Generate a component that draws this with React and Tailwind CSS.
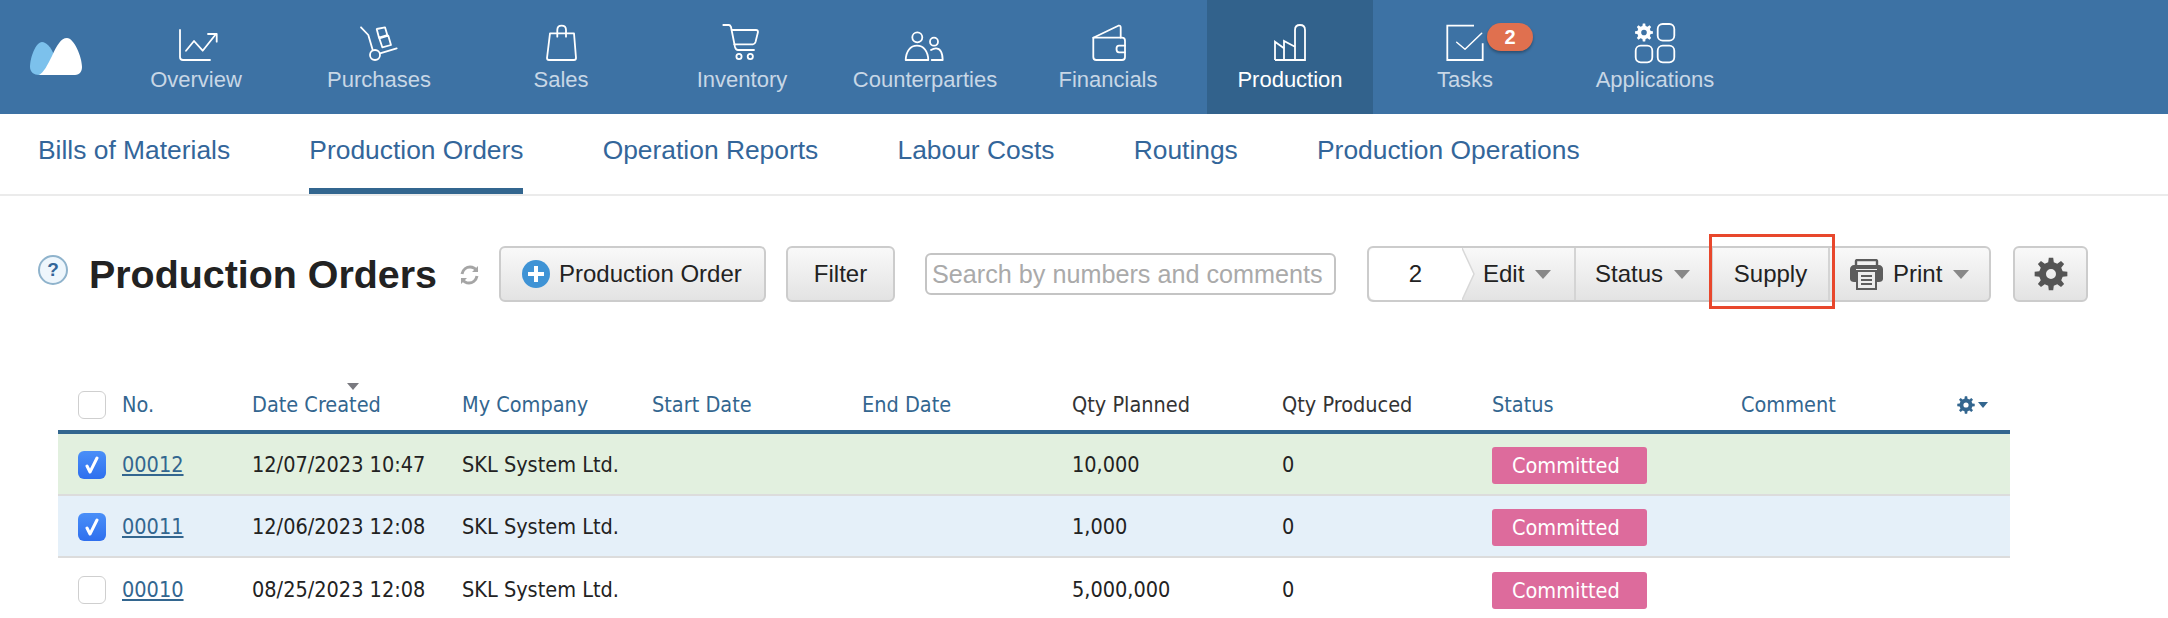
import React from 'react';

const line = { fill: 'none', stroke: '#fff', strokeWidth: 1.8, strokeLinecap: 'round', strokeLinejoin: 'round' };

// gear outline, used by the nav, the toolbar and the table header
const gearPath = (cx, cy, outer, inner, hole, teeth = 8) => {
  let d = '';
  const step = (Math.PI * 2) / teeth;
  for (let i = 0; i < teeth; i++) {
    const a = i * step - Math.PI / 2;
    const pts = [
      [inner, a - step * 0.3],
      [outer, a - step * 0.17],
      [outer, a + step * 0.17],
      [inner, a + step * 0.3],
    ];
    pts.forEach(([r, t], j) => {
      d += `${i === 0 && j === 0 ? 'M' : 'L'}${(cx + r * Math.cos(t)).toFixed(2)} ${(cy + r * Math.sin(t)).toFixed(2)}`;
    });
  }
  d += `ZM${cx - hole} ${cy}a${hole} ${hole} 0 1 0 ${hole * 2} 0a${hole} ${hole} 0 1 0 ${-hole * 2} 0Z`;
  return d;
};

// nav icons are drawn in page coordinates, the viewBox is centred on the item
const NavIcon = ({ center, children }) => (
  <svg width="60" height="64" viewBox={`${center - 30} 0 60 64`} {...line}>
    {children}
  </svg>
);

const Logo = () => (
  <svg width="52" height="37" viewBox="0 0 52 37">
    <path d="M12 4C6 4 0 19 0 29C0 34 4 37 9 37H14L24 17C21 9 16 4 12 4Z" fill="#7cc1ec" />
    <path d="M37 0C31 0 27 7 22 18C17 28 14 34 9 37H45C50 37 52 33 52 29C52 19 44 0 37 0Z" fill="#fff" />
  </svg>
);

const navItems = [
  {
    label: 'Overview',
    width: 'w-[166px]',
    icon: (
      <NavIcon center={196}>
        <path d="M180 30V57C180 59 181 60 183 60H210" />
        <path d="M186 50.7L194 41L202.7 50.7L216 34" />
        <path d="M208 34H216.7V41.7" />
      </NavIcon>
    ),
  },
  {
    label: 'Purchases',
    width: 'w-[200px]',
    icon: (
      <NavIcon center={379}>
        <path d="M361 27.3L368.3 35L372.7 50" />
        <circle cx="375" cy="55" r="5" />
        <path d="M380 53.3L396.7 48.3" />
        <path d="M376.7 29L385 27.3L387.3 35L379 37.7Z" />
        <path d="M379.3 38.3L388.3 35.7L391 45L382.3 47.3Z" />
      </NavIcon>
    ),
  },
  {
    label: 'Sales',
    width: 'w-[164px]',
    icon: (
      <NavIcon center={561}>
        <path d="M550 33.3H574L576 58C576 59 575 60 574 60H549C548 60 547 59 547 58Z" />
        <path d="M557.3 36.7V30C557.3 27 559 25.7 561.6 25.7C564 25.7 566 27 566 30V36.7" />
      </NavIcon>
    ),
  },
  {
    label: 'Inventory',
    width: 'w-[198px]',
    icon: (
      <NavIcon center={742}>
        <path d="M723.3 25H729C730 25 730.5 26 731 27L735 47C735.5 49 736.5 50 738 50H754" />
        <path d="M731.7 30H756C757.5 30 758 31 758 32L755.5 42C755 43.5 754 44.3 753 44.3H734.3" />
        <circle cx="739" cy="56.5" r="2.6" />
        <circle cx="750.3" cy="56.5" r="2.6" />
      </NavIcon>
    ),
  },
  {
    label: 'Counterparties',
    width: 'w-[168px]',
    icon: (
      <NavIcon center={925}>
        <circle cx="917.3" cy="37.3" r="5" />
        <path d="M905.7 60C906 51 910.5 45.7 917 45.7C923.5 45.7 928 51 928.3 60Z" />
        <circle cx="934" cy="41.7" r="4" />
        <path d="M931 50C932.5 49 934 48.3 936 48.3C940 48.3 942.5 53 942.7 60H931.7" />
      </NavIcon>
    ),
  },
  {
    label: 'Financials',
    width: 'w-[198px]',
    icon: (
      <NavIcon center={1108}>
        <path d="M1093.3 37.7L1118.3 25.7C1120 25.2 1120.7 26 1120.7 27.5V37.7" />
        <path d="M1093.3 37.7H1122C1124 37.7 1125 38.7 1125 40.7V57C1125 59 1124 60 1122 60H1096.3C1094.3 60 1093.3 59 1093.3 57Z" />
        <path d="M1125 45.7H1119C1117.5 45.7 1116.5 47 1116.5 49C1116.5 51 1117.5 52.3 1119 52.3H1125" />
      </NavIcon>
    ),
  },
  {
    label: 'Production',
    width: 'w-[166px]',
    active: true,
    icon: (
      <NavIcon center={1290}>
        <path strokeLinecap="butt" strokeLinejoin="miter" d="M1275 60V41.7L1284 48.3V60" />
        <path strokeLinecap="butt" strokeLinejoin="miter" d="M1284 48.3V41L1295 46.7" />
        <path strokeLinecap="butt" strokeLinejoin="miter" d="M1295 60V30C1295 27 1297 25 1300 25C1303 25 1305 27 1305 30V60H1275" />
      </NavIcon>
    ),
  },
  {
    label: 'Tasks',
    width: 'w-[184px]',
    badge: 2,
    icon: (
      <NavIcon center={1465}>
        <path strokeLinecap="butt" strokeLinejoin="miter" d="M1474 25.7H1447.3V60H1482.7V43.3" />
        <path d="M1456.7 42.3L1465 49.3L1481.7 33.3" strokeWidth="1.5" />
      </NavIcon>
    ),
  },
  {
    label: 'Applications',
    width: 'w-[196px]',
    icon: (
      <NavIcon center={1655}>
        <path d={gearPath(1644, 32.5, 9, 6.8, 2.8)} fill="#fff" fillRule="evenodd" stroke="none" />
        <rect x="1657.7" y="24" width="16.6" height="16.7" rx="5" />
        <rect x="1635.7" y="45.7" width="16.6" height="16.6" rx="5" />
        <rect x="1657.7" y="45.7" width="16.6" height="16.6" rx="5" />
      </NavIcon>
    ),
  },
];

const tabs = ['Bills of Materials', 'Production Orders', 'Operation Reports', 'Labour Costs', 'Routings', 'Production Operations'];

const rows = [
  { no: '00012', date: '12/07/2023 10:47', qty: '10,000', checked: true, bg: 'bg-[#e2f0df]' },
  { no: '00011', date: '12/06/2023 12:08', qty: '1,000', checked: true, bg: 'bg-[#e5f0f9]' },
  { no: '00010', date: '08/25/2023 12:08', qty: '5,000,000', checked: false, bg: 'bg-white' },
];

const gridCols = 'grid grid-cols-[64px_130px_210px_190px_210px_210px_210px_210px_249px_216px_53px] items-center';

const Caret = () => <span className="ml-[11px] inline-block border-x-[8px] border-t-[9px] border-x-transparent border-t-[#888]" />;

const CheckBox = ({ checked }) =>
  checked ? (
    <span className="flex h-[28px] w-[28px] items-center justify-center rounded-[6px] bg-gradient-to-b from-[#4a8ff8] to-[#2f6fee]">
      <svg width="16" height="18" viewBox="0 0 16 18" fill="none" stroke="#fff" strokeWidth="3" strokeLinecap="round" strokeLinejoin="round">
        <path d="M3 10L6 16L13 2" />
      </svg>
    </span>
  ) : (
    <span className="block h-[28px] w-[28px] rounded-[6px] border border-[#cfcfcf] bg-white" />
  );

export default function App() {
  return (
    <div className="h-[618px] w-[2168px] overflow-hidden bg-white font-['Liberation_Sans',Arial,sans-serif]">
      {/* top nav */}
      <div className="flex h-[114px] bg-[#3d72a4]">
        <div className="flex w-[113px] shrink-0 items-start pl-[30px] pt-[38px]">
          <Logo />
        </div>
        {navItems.map((item) => (
          <div key={item.label} className={`relative flex shrink-0 flex-col items-center ${item.width} ${item.active ? 'bg-[#32628c] text-white' : 'text-[#c8d7e6]'}`}>
            {item.icon}
            <div className="mt-[3px] text-[22px] leading-[26px]">{item.label}</div>
            {item.badge && (
              <span className="absolute left-[114px] top-[23px] flex h-[28px] w-[46px] items-center justify-center rounded-full bg-[#e0704f] text-[20px] font-bold text-white shadow-[0_2px_3px_rgba(0,0,0,0.3)]">
                {item.badge}
              </span>
            )}
          </div>
        ))}
      </div>

      {/* sub nav */}
      <div className="flex h-[82px] gap-[79.2px] border-b-2 border-[#ebebeb] pl-[38px]">
        {tabs.map((tab) => (
          <div key={tab} className={`flex h-[80px] items-center border-b-[6px] text-[26.4px] text-[#33669a] ${tab === 'Production Orders' ? 'border-[#33668f]' : 'border-transparent'}`}>
            {tab}
          </div>
        ))}
      </div>

      {/* toolbar */}
      <div className="mt-[50px] flex h-[56px] items-center pl-[38px]">
        <span className="mb-[8px] flex h-[30px] w-[30px] items-center justify-center rounded-full border-2 border-[#8fb3cc] bg-[#eef6fc] text-[19px] font-bold text-[#336699]">?</span>
        <h1 className="ml-[21px] mt-[1px] text-[39.4px] font-bold leading-none text-[#222]">Production Orders</h1>
        <svg className="ml-[22px] mt-[2px]" width="21" height="20" viewBox="0 0 21 20" fill="none" stroke="#a5a5a5" strokeWidth="3">
          <path d="M3 9C4 4 8 2 11 2C14 2 16 3 18 6" />
          <path d="M18 11C17 16 13 18 10 18C7 18 5 17 3 14" />
          <path d="M19 1V7H13M2 19V13H8" fill="#a5a5a5" stroke="none" />
        </svg>

        <button className="ml-[19px] flex h-[56px] w-[267px] items-center rounded-[6px] border-2 border-[#ccc] bg-gradient-to-b from-[#f9f9f9] to-[#e3e3e3] pl-[21px] text-[24px] text-[#222]">
          <span className="mr-[9px] flex h-[28px] w-[28px] items-center justify-center rounded-full bg-[#3f93d5] text-white">
            <svg width="18" height="18" viewBox="0 0 18 18" fill="#fff"><path d="M7 1H11V7H17V11H11V17H7V11H1V7H7Z" /></svg>
          </span>
          Production Order
        </button>
        <button className="ml-[20px] flex h-[56px] w-[109px] items-center justify-center rounded-[6px] border-2 border-[#ccc] bg-gradient-to-b from-[#f9f9f9] to-[#e3e3e3] text-[24px] text-[#222]">
          Filter
        </button>

        <input
          readOnly
          placeholder="Search by numbers and comments"
          className="ml-[30px] h-[42px] w-[411px] rounded-[6px] border-2 border-[#c4c4c4] bg-white pl-[5px] text-[25.2px] outline-none placeholder:text-[#aaa]"
        />

        {/* action group */}
        <div className="relative ml-[31px] flex h-[56px] w-[624px] rounded-[6px] border-2 border-[#ccc] bg-gradient-to-b from-[#f9f9f9] to-[#e3e3e3] text-[24px] text-[#222]">
          <div className="flex w-[93px] items-center justify-center rounded-l-[6px] bg-white">2</div>
          <svg className="shrink-0" width="14" height="52" viewBox="0 0 14 52">
            <path d="M0 0L12 26L0 52Z" fill="#fff" />
            <path d="M0 0L12 26L0 52" fill="none" stroke="#d8d8d8" strokeWidth="1.5" />
          </svg>
          <div className="flex w-[100px] items-center border-r-2 border-[#d4d4d4] pl-[7px]">Edit<Caret /></div>
          <div className="flex w-[135px] items-center pl-[19px]">Status<Caret /></div>
          <div className="flex w-[119px] items-center justify-center border-x-2 border-[#d4d4d4]">Supply</div>
          <div className="flex flex-1 items-center gap-[10px] pl-[20px]">
            <svg width="33" height="31" viewBox="0 0 33 31">
              <path d="M6 7V2C6 1 7 1 8 1H25C26 1 27 1 27 2V7" fill="none" stroke="#5c5c5c" strokeWidth="2.4" />
              <path d="M4 6H29C31 6 33 8 33 10V20C33 22 31 23 29 23H27V10H6V23H4C2 23 0 22 0 20V10C0 8 2 6 4 6Z" fill="#5c5c5c" />
              <path d="M7 12H26V30H7Z" fill="#ececec" stroke="#5c5c5c" strokeWidth="2" />
              <path d="M11 17H22M11 21H22M11 25H22" stroke="#5c5c5c" strokeWidth="2" />
            </svg>
            <span className="flex items-center">Print<Caret /></span>
          </div>
          {/* red highlight around Supply */}
          <span className="absolute left-[340px] top-[-14px] h-[75px] w-[126px] border-[3px] border-[#e8472c]" />
        </div>

        <button className="ml-[22px] flex h-[56px] w-[75px] items-center justify-center rounded-[6px] border-2 border-[#ccc] bg-gradient-to-b from-[#f9f9f9] to-[#e3e3e3]">
          <svg width="34" height="34" viewBox="0 0 34 34">
            <path d={gearPath(17, 17, 16.5, 12, 5)} fill="#555" fillRule="evenodd" />
          </svg>
        </button>
      </div>

      {/* table */}
      <div className="ml-[58px] mt-[78px] w-[1952px] font-['DejaVu_Sans_Condensed','DejaVu_Sans',sans-serif] font-stretch-condensed text-[21.5px] text-[#222]">
        <div className={`${gridCols} relative h-[54px] border-b-4 border-[#33668f] text-[#33668f]`}>
          <div className="pl-[20px]"><CheckBox /></div>
          <div className="pt-[1px]">No.</div>
          <div className="pt-[1px]">Date Created</div>
          <div className="pt-[1px]">My Company</div>
          <div className="pt-[1px]">Start Date</div>
          <div className="pt-[1px]">End Date</div>
          <div className="pt-[1px] text-[#333]">Qty Planned</div>
          <div className="pt-[1px] text-[#333]">Qty Produced</div>
          <div className="pt-[1px]">Status</div>
          <div className="pt-[1px]">Comment</div>
          <div className="flex items-center gap-[3px]">
            <svg width="18" height="18" viewBox="0 0 18 18">
              <path d={gearPath(9, 9, 8.8, 6.5, 2.6)} fill="#33668f" fillRule="evenodd" />
            </svg>
            <span className="border-x-[5px] border-t-[6px] border-x-transparent border-t-[#33668f]" />
          </div>
          <span className="absolute left-[289px] top-[3px] border-x-[6px] border-t-[7px] border-x-transparent border-t-[#7a7a80]" />
        </div>
        {rows.map((row, i) => (
          <div key={row.no} className={`${gridCols} h-[62px] pt-[2px] ${i < 2 ? 'border-b-2 border-[#dcdcdc]' : ''} ${row.bg}`}>
            <div className="pl-[20px]"><CheckBox checked={row.checked} /></div>
            <a className="pt-[1px] text-[#33668f] underline underline-offset-2">{row.no}</a>
            <div className="pt-[1px]">{row.date}</div>
            <div className="pt-[1px]">SKL System Ltd.</div>
            <div />
            <div />
            <div className="pt-[1px]">{row.qty}</div>
            <div className="pt-[1px]">0</div>
            <div>
              <span className="flex h-[37px] w-[155px] items-center rounded-[3px] bg-[#dd6b9c] pl-[20px] pt-[3px] text-white">Committed</span>
            </div>
            <div />
            <div />
          </div>
        ))}
      </div>
    </div>
  );
}
